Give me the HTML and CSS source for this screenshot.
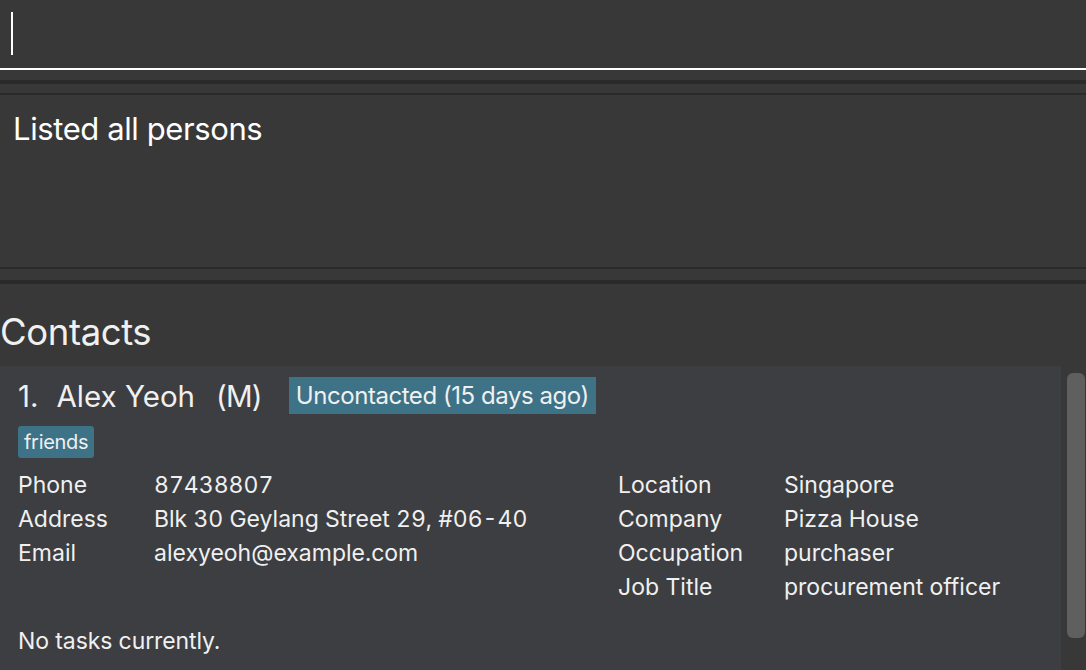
FILE: index.html
```html
<!DOCTYPE html>
<html>
<head>
<meta charset="utf-8">
<link rel="stylesheet" href="styles.css">
</head>
<body>
<div class="app">
  <div class="command-box">
    <span class="caret"></span>
  </div>
  <div class="gap-a"></div>
  <div class="band"></div>
  <div class="gap-b"></div>
  <div class="line"></div>
  <div class="result">Listed all persons</div>
  <div class="line"></div>
  <div class="gap-c"></div>
  <div class="band"></div>
  <div class="contacts-title">Contacts</div>
  <div class="list-area">
    <div class="card">
      <div class="name-row">
        <span class="idx">1.</span>
        <span class="name">Alex Yeoh</span>
        <span class="gender">(M)</span>
        <span class="status">Uncontacted (15 days ago)</span>
      </div>
      <div class="tags"><span class="tag">friends</span></div>
      <div class="details">
        <div class="col col-left">
          <span class="lbl">Phone</span><span class="val">87438807</span>
          <span class="lbl">Address</span><span class="val">Blk 30 Geylang Street 29, #06-40</span>
          <span class="lbl">Email</span><span class="val">alexyeoh@example.com</span>
        </div>
        <div class="col col-right">
          <span class="lbl">Location</span><span class="val">Singapore</span>
          <span class="lbl">Company</span><span class="val">Pizza House</span>
          <span class="lbl">Occupation</span><span class="val">purchaser</span>
          <span class="lbl">Job Title</span><span class="val">procurement officer</span>
        </div>
      </div>
      <div class="tasks">No tasks currently.</div>
    </div>
    <div class="scroll-track"><div class="thumb"></div></div>
  </div>
</div>
</body>
</html>
```
FILE: styles.css
```css
* { box-sizing: border-box; }
html, body {
  margin: 0;
  padding: 0;
  background: #383838;
  overflow: hidden;
}
body {
  font-family: Inter, "Noto Sans", sans-serif;
  color: #f0f0f0;
}
.app {
  display: flex;
  flex-direction: column;
  width: 1086px;
  height: 670px;
  overflow: hidden;
}
.command-box {
  height: 70px;
  flex: none;
  border-bottom: 2px solid #ffffff;
  padding: 12px 0 0 11px;
}
.caret {
  display: block;
  width: 2px;
  height: 43px;
  background: #ffffff;
}
.gap-a { height: 10px; flex: none; }
.band { height: 4px; background: #2a2a2a; flex: none; }
.gap-b { height: 9px; flex: none; }
.line { height: 2px; background: #2a2a2a; flex: none; }
.gap-c { height: 11px; flex: none; }
.result {
  height: 172px;
  flex: none;
  padding: 14px 0 0 13px;
  font-size: 31px;
  letter-spacing: -0.4px;
  line-height: 40px;
  color: #ffffff;
}
.contacts-title {
  height: 82px;
  flex: none;
  padding-top: 25px;
  font-size: 36.5px;
  letter-spacing: -0.4px;
  line-height: 46px;
  color: #f0f0f0;
}
.list-area {
  flex: 1;
  display: flex;
  min-height: 0;
}
.card {
  width: 1061px;
  background: #3c3e41;
  padding: 11px 0 0 18px;
}
.scroll-track {
  flex: 1;
  padding: 7px 1px 0 6px;
}
.thumb {
  height: 265px;
  background: #5f5f5f;
  border-radius: 6px;
}
.name-row {
  display: flex;
  align-items: center;
  height: 37px;
  font-size: 29.5px;
  letter-spacing: 0;
  color: #f0f0f0;
}
.idx { margin-right: 18px; }
.name { margin-right: 21px; }
.gender { margin-right: 27px; letter-spacing: -0.8px; }
.status {
  background: #3e7287;
  height: 37px;
  line-height: 37px;
  padding: 0 7px;
  font-size: 24px;
  letter-spacing: -0.45px;
}
.tags {
  margin-top: 12px;
  display: flex;
}
.tag {
  background: #3e7287;
  border-radius: 3px;
  height: 32px;
  line-height: 32px;
  padding: 0 6px;
  font-size: 20px;
  letter-spacing: -0.3px;
}
.details {
  display: flex;
  margin-top: 10px;
  font-size: 23px;
  letter-spacing: 0;
  line-height: 34px;
}
.val {
  font-variant-numeric: tabular-nums;
}
.col {
  display: grid;
}
.col-left {
  grid-template-columns: 136px auto;
  width: 600px;
  align-content: start;
}
.col-right {
  grid-template-columns: 166px auto;
}
.tasks {
  margin-top: 20px;
  font-size: 23px;
  letter-spacing: -0.1px;
  line-height: 34px;
}
```
